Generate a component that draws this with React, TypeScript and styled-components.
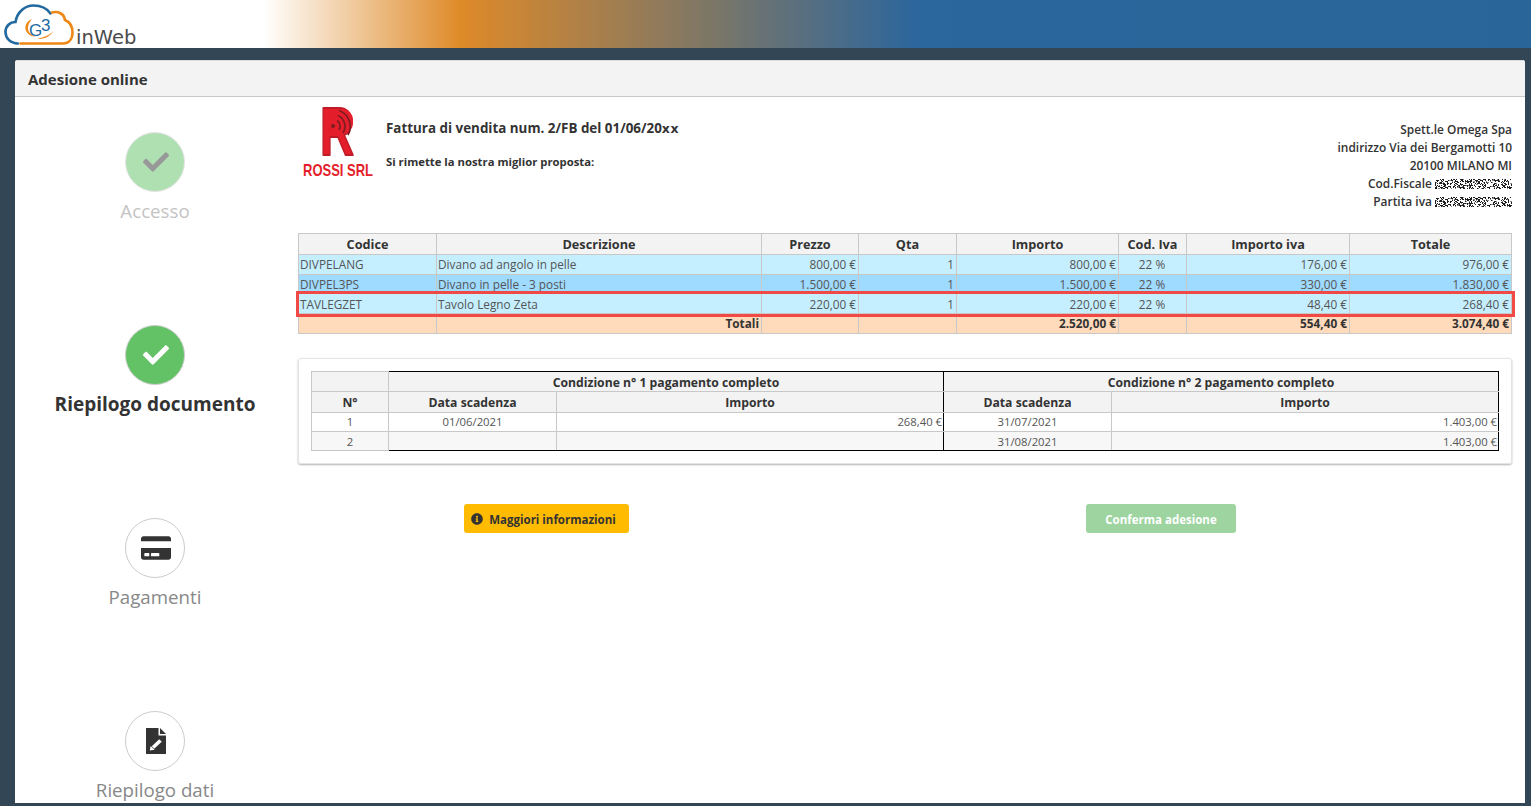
import React, { FC } from 'react';
import styled, { createGlobalStyle } from 'styled-components';
import { FaCheck, FaCreditCard, FaInfoCircle } from 'react-icons/fa';

const GlobalStyle = createGlobalStyle`
  html, body {
    margin: 0;
    height: 806px;
    overflow: hidden;
    background: #334656;
    font-family: "Open Sans", "Noto Sans", sans-serif;
    color: #333;
  }
`;

const rows = [
  ['DIVPELANG', 'Divano ad angolo in pelle', '800,00 €', '1', '800,00 €', '22 %', '176,00 €', '976,00 €'],
  ['DIVPEL3PS', 'Divano in pelle - 3 posti', '1.500,00 €', '1', '1.500,00 €', '22 %', '330,00 €', '1.830,00 €'],
  ['TAVLEGZET', 'Tavolo Legno Zeta', '220,00 €', '1', '220,00 €', '22 %', '48,40 €', '268,40 €'],
];

const noise = (() => {
  const out: { x: number; y: number; c: string }[] = [];
  let s = 17;
  for (let y = 0; y < 10; y++) {
    for (let x = 0; x < 77; x++) {
      s = (s * 137 + 59) % 1009;
      const c = s % 3 === 0 ? '#1c1c1c' : s % 7 === 1 ? '#888' : '#fff';
      out.push({ x, y, c });
    }
  }
  return out;
})();

const Mosaic: FC = () => (
  <MosaicSvg viewBox="0 0 77 10" width="77" height="10" shapeRendering="crispEdges">
    {noise.map((n) => (
      <rect key={`${n.x}-${n.y}`} x={n.x} y={n.y} width="1" height="1" fill={n.c} />
    ))}
  </MosaicSvg>
);

const CloudLogo: FC = () => (
  <svg width="76" height="48" viewBox="0 0 76 48">
    <path d="M18 43.5 C10 43 5.5 38 5.5 32 C5.5 26 10 22 15.5 22 C17 12 25 5.5 33.5 5.5 C41 5.5 47 8.5 50.5 13.5" fill="none" stroke="#22699f" strokeWidth="2.6" strokeLinecap="round" />
    <path d="M52 12.5 C58 11 64 13.5 65 20 C70 22 72.5 27 72.5 32.5 C72.5 39 69 43.5 63 43.5 L20.5 43.5" fill="none" stroke="#ee8714" strokeWidth="2.6" strokeLinecap="round" />
    <path d="M32 19 C26 21 23.5 28 27 32.5 C29 35.5 33 37 36 36.5 C31 35.5 27.5 32 28 27 C28.5 24 30 21 32 19 Z" fill="#ee8714" />
    <path d="M37 39 C43 39.5 50 37 53 31.5 C49 35.5 43 37.5 37 39 Z" fill="#ee8714" />
    <text x="29" y="36" fontFamily="'Liberation Sans', sans-serif" fontSize="17" fill="#22699f">G</text>
    <text x="41" y="31" fontFamily="'Liberation Sans', sans-serif" fontSize="17" fill="#22699f">3</text>
  </svg>
);

const RossiLogo: FC = () => (
  <LogoSvg width="76" height="72" viewBox="0 0 76 72">
    <text x="22" y="49.5" fontFamily="'Liberation Sans', sans-serif" fontWeight="700" fontSize="69" fill="#e41e2b" stroke="#c01c28" strokeWidth="2" strokeLinejoin="round" textLength="34" lengthAdjust="spacingAndGlyphs">R</text>
    <rect x="30" y="4" width="25" height="25" rx="11" fill="#e41e2b" />
    <circle cx="35" cy="21" r="2" fill="#7d1d22" />
    <path d="M39 15.5 A7 7 0 0 1 41 25 M40 10.5 A12 12 0 0 1 45 28 M41 5.5 A17 17 0 0 1 50 30" fill="none" stroke="#7d1d22" strokeWidth="1.7" />
    <text x="5" y="71" fontFamily="'Liberation Sans', sans-serif" fontWeight="700" fontSize="17" fill="#e41e2b" textLength="70" lengthAdjust="spacingAndGlyphs">ROSSI SRL</text>
  </LogoSvg>
);

const FileEditIcon: FC = () => (
  <svg width="20" height="26" viewBox="0 0 20 26">
    <path d="M0 0 H12.5 V7.5 H20 V26 H0 Z" fill="#333" />
    <path d="M14 0 L20 6 H14 Z" fill="#333" />
    <path d="M7 19.5 L14.5 12.5" stroke="#fff" strokeWidth="3.6" />
    <path d="M3.8 22.500 L4.6 18 L8.6 21.7 Z" fill="#fff" />
  </svg>
);

const App: FC = () => {
  return (
    <>
      <GlobalStyle />
      <TopBar>
        <CloudLogo />
        <Brand>inWeb</Brand>
      </TopBar>
      <Panel>
        <PanelTitle>Adesione online</PanelTitle>
        <PanelBody>
          <Steps>
            <Step $state="done">
              <Bubble $state="done"><FaCheck size={26} /></Bubble>
              <StepLabel $state="done">Accesso</StepLabel>
            </Step>
            <Step $state="active">
              <Bubble $state="active"><FaCheck size={26} /></Bubble>
              <StepLabel $state="active">Riepilogo documento</StepLabel>
            </Step>
            <Step $state="todo">
              <Bubble $state="todo"><FaCreditCard size={30} /></Bubble>
              <StepLabel $state="todo">Pagamenti</StepLabel>
            </Step>
            <Step $state="todo">
              <Bubble $state="todo"><FileEditIcon /></Bubble>
              <StepLabel $state="todo">Riepilogo dati</StepLabel>
            </Step>
          </Steps>
          <Content>
            <DocHead>
              <LogoBox><RossiLogo /></LogoBox>
              <DocTitle>
                <h2>Fattura di vendita num. 2/FB del 01/06/20<Xx>xx</Xx></h2>
                <p>Si rimette la nostra miglior proposta:</p>
              </DocTitle>
              <Address>
                <div>Spett.le Omega Spa</div>
                <div>indirizzo Via dei Bergamotti 10</div>
                <div>20100 MILANO MI</div>
                <div>Cod.Fiscale <Mosaic /></div>
                <div>Partita iva <Mosaic /></div>
              </Address>
            </DocHead>

            <ItemsTable>
              <colgroup>
                <col width="138" /><col width="325" /><col width="97" /><col width="98" />
                <col width="162" /><col width="68" /><col width="163" /><col width="162" />
              </colgroup>
              <thead>
                <tr>
                  <Th>Codice</Th><Th>Descrizione</Th><Th>Prezzo</Th><Th>Qta</Th>
                  <Th>Importo</Th><Th>Cod. Iva</Th><Th>Importo iva</Th><Th>Totale</Th>
                </tr>
              </thead>
              <tbody>
                {rows.map((r, i) => (
                  <ItemRow key={r[0]} $dark={i === 1} $marked={i === 2}>
                    <Td>{r[0]}</Td>
                    <Td>{r[1]}</Td>
                    <Td $align="right">{r[2]}</Td>
                    <Td $align="right">{r[3]}</Td>
                    <Td $align="right">{r[4]}</Td>
                    <Td $align="center">{r[5]}</Td>
                    <Td $align="right">{r[6]}</Td>
                    <Td $align="right">{r[7]}</Td>
                  </ItemRow>
                ))}
                <TotalRow>
                  <Td />
                  <Td $align="right">Totali</Td>
                  <Td />
                  <Td />
                  <Td $align="right">2.520,00 €</Td>
                  <Td />
                  <Td $align="right">554,40 €</Td>
                  <Td $align="right">3.074,40 €</Td>
                </TotalRow>
              </tbody>
            </ItemsTable>

            <TermsCard>
              <TermsTable>
                <colgroup>
                  <col width="77" /><col width="168" /><col width="387" /><col width="168" /><col width="387" />
                </colgroup>
                <thead>
                  <tr>
                    <TermTh />
                    <TermTh colSpan={2} $left $top $right>Condizione n° 1 pagamento completo</TermTh>
                    <TermTh colSpan={2} $top $right>Condizione n° 2 pagamento completo</TermTh>
                  </tr>
                  <tr>
                    <TermTh>N°</TermTh>
                    <TermTh $left>Data scadenza</TermTh>
                    <TermTh $right>Importo</TermTh>
                    <TermTh>Data scadenza</TermTh>
                    <TermTh $right>Importo</TermTh>
                  </tr>
                </thead>
                <tbody>
                  <tr>
                    <TermTd $align="center">1</TermTd>
                    <TermTd $align="center" $left>01/06/2021</TermTd>
                    <TermTd $align="right" $right>268,40 €</TermTd>
                    <TermTd $align="center">31/07/2021</TermTd>
                    <TermTd $align="right" $right>1.403,00 €</TermTd>
                  </tr>
                  <tr>
                    <TermTd $align="center" $shade>2</TermTd>
                    <TermTd $shade $left $bottom />
                    <TermTd $shade $right $bottom />
                    <TermTd $align="center" $shade $bottom>31/08/2021</TermTd>
                    <TermTd $align="right" $shade $right $bottom>1.403,00 €</TermTd>
                  </tr>
                </tbody>
              </TermsTable>
            </TermsCard>

            <Actions>
              <InfoButton><FaInfoCircle size={12} /> Maggiori informazioni</InfoButton>
              <ConfirmButton>Conferma adesione</ConfirmButton>
            </Actions>
          </Content>
        </PanelBody>
      </Panel>
    </>
  );
};

type StepState = 'done' | 'active' | 'todo';

const TopBar = styled.header`
  height: 48px;
  display: flex;
  align-items: flex-end;
  background: linear-gradient(90deg, #fff 17.2%, #de8a28 30.1%, #2b669c 60%, #2a6599 100%);
`;

const Brand = styled.span`
  font-family: "DejaVu Sans", sans-serif;
  font-size: 19.5px;
  line-height: 22px;
  margin-bottom: -1px;
  color: #4a4a4a;
`;

const Panel = styled.main`
  margin: 12px 6px 0 15px;
  height: 743px;
  background: #fff;
  border-radius: 3px 3px 0 0;
  overflow: hidden;
`;

const PanelTitle = styled.div`
  height: 37px;
  box-sizing: border-box;
  padding-left: 13px;
  line-height: 37px;
  font-size: 15px;
  font-weight: 700;
  color: #333;
  background: #f3f3f3;
  border-bottom: 1px solid #c8c8c8;
  border-top: 1px solid #ddd;
`;

const PanelBody = styled.div`
  display: flex;
`;

const Steps = styled.nav`
  width: 280px;
  margin-right: 3px;
  flex: none;
  padding-top: 35px;
`;

const Step = styled.div<{ $state: StepState }>`
  height: 193px;
  display: flex;
  flex-direction: column;
  align-items: center;
  opacity: ${(p) => (p.$state === 'done' ? 0.5 : 1)};
`;

const Bubble = styled.div<{ $state: StepState }>`
  width: 60px;
  height: 60px;
  box-sizing: border-box;
  padding-left: 2px;
  border-radius: 50%;
  border: 1px solid #ccc;
  display: flex;
  align-items: center;
  justify-content: center;
  color: ${(p) => (p.$state === 'active' ? '#fff' : '#333')};
  background: ${(p) => (p.$state === 'todo' ? '#fff' : '#62c265')};
`;

const StepLabel = styled.div<{ $state: StepState }>`
  margin-top: 6px;
  font-size: ${(p) => (p.$state === 'active' ? 19 : 18.7)}px;
  line-height: 26px;
  white-space: nowrap;
  font-weight: ${(p) => (p.$state === 'active' ? 700 : 400)};
  color: ${(p) => (p.$state === 'active' ? '#333' : '#888')};
`;

const Content = styled.section`
  width: 1214px;
  flex: none;
`;

const DocHead = styled.div`
  display: flex;
  height: 136px;
  padding-top: 8px;
  box-sizing: border-box;
`;

const LogoBox = styled.div`
  width: 88px;
  flex: none;
`;

const LogoSvg = styled.svg`
  overflow: visible;
`;

const DocTitle = styled.div`
  flex: 1;
  h2 {
    margin: 0;
    padding-top: 13px;
    font-size: 13.4px;
    line-height: 20px;
    font-weight: 700;
    color: #333;
  }
  p {
    margin: 15px 0 0;
    font-size: 11.3px;
    line-height: 16px;
    font-weight: 700;
    color: #333;
  }
`;

const Xx = styled.span`
  font-family: "DejaVu Sans", sans-serif;
  font-size: 12.5px;
  letter-spacing: 0.5px;
`;

const Address = styled.div`
  text-align: right;
  padding-top: 15px;
  font-size: 11.9px;
  line-height: 18px;
  font-weight: 600;
  color: #333;
  white-space: nowrap;
`;

const MosaicSvg = styled.svg`
  vertical-align: -1px;
`;

const ItemsTable = styled.table`
  width: 1213px;
  table-layout: fixed;
  border-collapse: collapse;
  font-size: 11.8px;
`;

const Th = styled.th`
  height: 20px;
  padding: 0 2px;
  background: #f3f3f3;
  border: 1px solid #c8c8c8;
  font-size: 12.7px;
  font-weight: 700;
  color: #333;
`;

const Td = styled.td<{ $align?: string }>`
  height: 18.7px;
  padding: 0 2px 0 1px;
  border: 1px solid #c8c8c8;
  text-align: ${(p) => p.$align || 'left'};
  color: #555;
  white-space: nowrap;
  overflow: hidden;
`;

const ItemRow = styled.tr<{ $dark: boolean; $marked: boolean }>`
  background: ${(p) => (p.$dark ? '#9fdaff' : '#c5efff')};
  ${(p) => p.$marked && 'outline: 3px solid #ef4a46; outline-offset: 0;'}
`;

const TotalRow = styled.tr`
  background: #ffdbbc;
  td {
    font-weight: 700;
    color: #333;
  }
`;

const TermsCard = styled.div`
  margin-top: 24px;
  height: 106px;
  box-sizing: border-box;
  padding: 12px 12px 0;
  border: 1px solid #e4e4e4;
  border-radius: 3px;
  box-shadow: 0 1px 2px rgba(0, 0, 0, 0.3);
`;

const TermsTable = styled.table`
  width: 1187px;
  table-layout: fixed;
  border-collapse: collapse;
`;

const TermTh = styled.th<{ $left?: boolean; $right?: boolean; $top?: boolean }>`
  height: 18.5px;
  padding: 1px 0 0;
  background: #f3f3f3;
  font-size: 12.2px;
  font-weight: 700;
  color: #333;
  border: 1px solid #c8c8c8;
  ${(p) => p.$left && 'border-left: 1px solid #000;'}
  ${(p) => p.$right && 'border-right: 1px solid #000;'}
  ${(p) => p.$top && 'border-top: 1px solid #000;'}
`;

const TermTd = styled.td<{ $align?: string; $shade?: boolean; $left?: boolean; $right?: boolean; $bottom?: boolean }>`
  height: 18.2px;
  padding: 0 1px;
  font-size: 11.3px;
  color: #555;
  text-align: ${(p) => p.$align || 'left'};
  background: ${(p) => (p.$shade ? '#f7f7f7' : '#fff')};
  border: 1px solid #c8c8c8;
  ${(p) => p.$left && 'border-left: 1px solid #000;'}
  ${(p) => p.$right && 'border-right: 1px solid #000;'}
  ${(p) => p.$bottom && 'border-bottom: 1px solid #000;'}
`;

const Actions = styled.div`
  display: flex;
  align-items: center;
  margin-top: 40px;
  padding-left: 166px;
  gap: 457px;
`;

const BaseButton = styled.button`
  height: 29px;
  box-sizing: border-box;
  border: 0;
  border-radius: 3px;
  font-family: inherit;
  font-size: 11.5px;
  font-weight: 700;
  display: flex;
  align-items: center;
  justify-content: center;
  gap: 6px;
  padding: 2px 0 0;
`;

const InfoButton = styled(BaseButton)`
  width: 165px;
  padding-right: 6px;
  background: #ffbb00;
  color: #333;
`;

const ConfirmButton = styled(BaseButton)`
  width: 150px;
  background: #9dd49f;
  color: #fff;
`;

export default App;
